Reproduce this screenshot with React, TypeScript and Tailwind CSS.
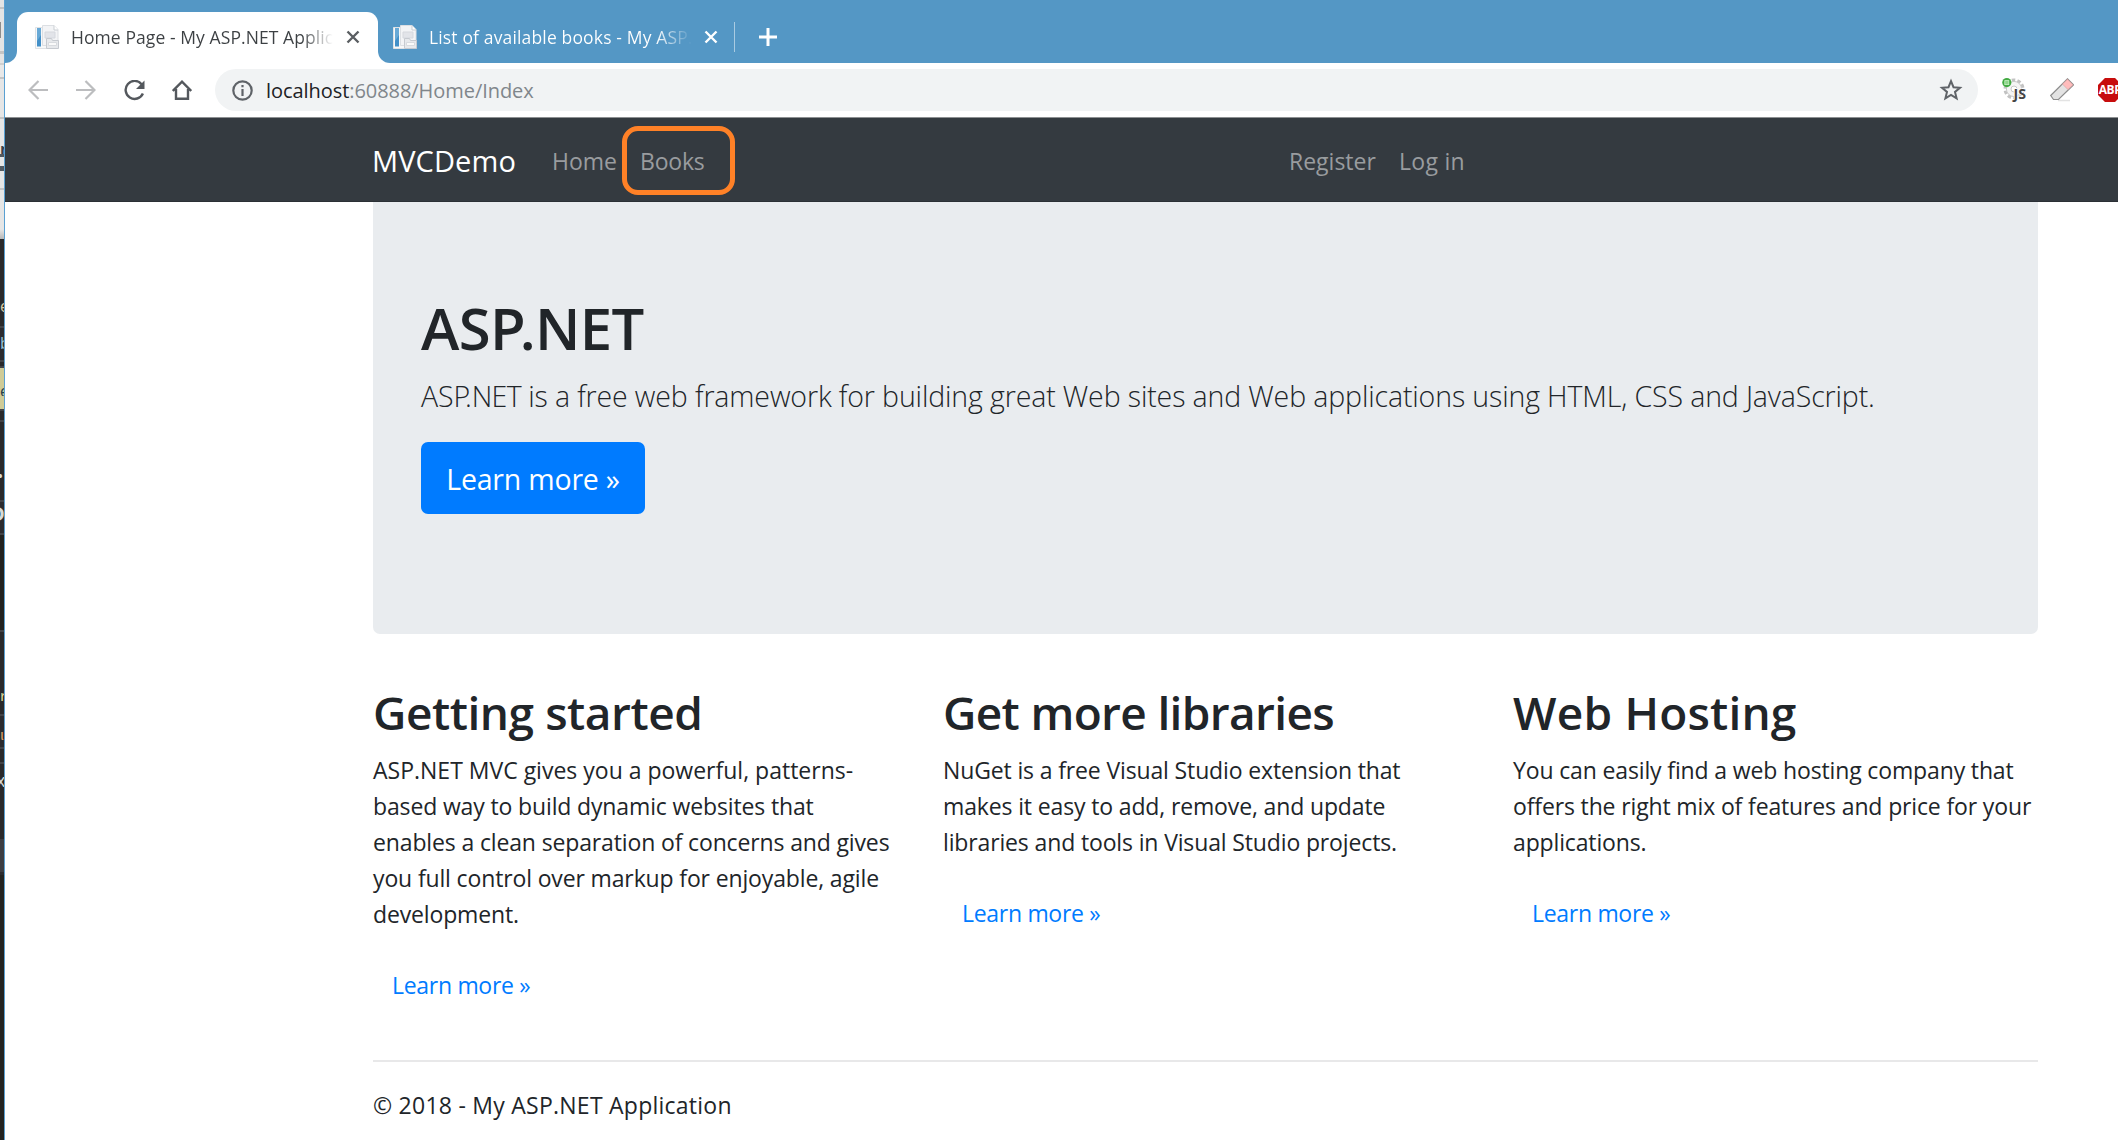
import type { ReactNode } from 'react';

/* Sliver of the editor window that peeks out behind the browser. */
const sliver: { h: number; cls: string; glyph?: string }[] = [
  { h: 7, cls: 'bg-[#e4e4e4]' },
  { h: 2, cls: 'bg-[#c4c4c4]' },
  { h: 13, cls: 'bg-[#e4e4e4]' },
  { h: 16, cls: 'bg-[#e4e4e4] border-l border-[#8c8c8c]' },
  { h: 13, cls: 'bg-[#e4e4e4]' },
  { h: 3, cls: 'bg-[#c4c4c4]' },
  { h: 9, cls: 'bg-[#e4e4e4]' },
  { h: 2, cls: 'bg-[#cfcfcf]' },
  { h: 12, cls: 'bg-[#e8e8e8]' },
  { h: 2, cls: 'bg-[#c4c4c4]' },
  { h: 38, cls: 'bg-[#e6e6e6]' },
  { h: 2, cls: 'bg-[#c4c4c4]' },
  { h: 23, cls: 'bg-[#e6e6e6]' },
  { h: 12, cls: 'bg-[#e6e6e6] text-[#39424c] text-[16px] font-bold', glyph: 'n' },
  { h: 3, cls: 'bg-[#525a62]' },
  { h: 9, cls: 'bg-[#e6e6e6]' },
  { h: 5, cls: 'bg-[#525a62]' },
  { h: 17, cls: 'bg-[#e6e6e6]' },
  { h: 2, cls: 'bg-[#c4c4c4]' },
  { h: 49, cls: 'bg-linear-to-b from-[#e6e6e6] from-80% to-[#b8b8b8]' },
  { h: 60, cls: 'bg-[#29292b]' },
  { h: 14, cls: 'bg-[#29292b] text-[#d8c9a0] text-[16px]', glyph: 'e' },
  { h: 13, cls: 'bg-[#29292b]' },
  { h: 2, cls: 'bg-[#424347]' },
  { h: 8, cls: 'bg-[#2b2b2f]' },
  { h: 16, cls: 'bg-[#2b2b2f] text-[#9cc4d8] text-[16px]', glyph: 'b' },
  { h: 8, cls: 'bg-[#2b2b2f]' },
  { h: 2, cls: 'bg-[#424347]' },
  { h: 4, cls: 'bg-[#29292b]' },
  { h: 2, cls: 'bg-[#424347]' },
  { h: 16, cls: 'bg-[#cfcb97]' },
  { h: 12, cls: 'bg-[#cfcb97] text-[#25404a] text-[16px]', glyph: 'e' },
  { h: 13, cls: 'bg-[#cfcb97]' },
  { h: 2, cls: 'bg-[#424347]' },
  { h: 9, cls: 'bg-[#29292b]' },
  { h: 2, cls: 'bg-[#424347]' },
  { h: 48, cls: 'bg-[#29292b]' },
  { h: 10, cls: 'bg-[#29292b] text-[#d6dad8] text-[12px] font-bold -indent-[2px]', glyph: '•' },
  { h: 20, cls: 'bg-[#29292b]' },
  { h: 2, cls: 'bg-[#424347]' },
  { h: 5, cls: 'bg-[#2b2b2f]' },
  { h: 16, cls: 'bg-[#2b2b2f] text-[#d6dad8] text-[20px] font-bold -indent-[10px]', glyph: 'D' },
  { h: 10, cls: 'bg-[#2b2b2f]' },
  { h: 2, cls: 'bg-[#424347]' },
  { h: 95, cls: 'bg-[#21211f]' },
  { h: 2, cls: 'bg-[#424347]' },
  { h: 57, cls: 'bg-[#29292b]' },
  { h: 12, cls: 'bg-[#29292b] text-[#e0dc98] text-[16px]', glyph: 'r' },
  { h: 13, cls: 'bg-[#29292b]' },
  { h: 2, cls: 'bg-[#424347]' },
  { h: 12, cls: 'bg-[#2b2b2f]' },
  { h: 12, cls: 'bg-[#2b2b2f] text-[#e0a368] text-[16px]', glyph: 'u' },
  { h: 7, cls: 'bg-[#2b2b2f]' },
  { h: 2, cls: 'bg-[#424347]' },
  { h: 13, cls: 'bg-[#29292b]' },
  { h: 2, cls: 'bg-[#424347]' },
  { h: 9, cls: 'bg-[#29292b]' },
  { h: 14, cls: 'bg-[#29292b] text-[#d6dad8] text-[18px] -indent-[4px]', glyph: 'x' },
  { h: 52, cls: 'bg-[#29292b]' },
  { h: 33, cls: 'bg-[#3c3d42]' },
  { h: 3, cls: 'bg-[#2b2b2f]' },
];

function BackgroundSliver() {
  return (
    <div className="flex w-[5px] shrink-0 flex-col overflow-hidden border-r border-[#5aa0d2] bg-[#232321]">
      {sliver.map((s, i) => (
        <div key={i} className={`shrink-0 overflow-hidden leading-[14px] ${s.cls}`} style={{ height: s.h }}>
          {s.glyph}
        </div>
      ))}
    </div>
  );
}

function Favicon() {
  return (
    <svg className="size-6 shrink-0" viewBox="0 0 24 24">
      <path d="M0.500 2.500h16v21h-16z" fill="#f7f8f9" stroke="#dfe2e5" />
      <path d="M2 3h4v18.500H2z" fill="#4390c8" />
      <path d="M2 3h4v7l-4 6z" fill="#68a9d6" />
      <path d="M7.500 0.500h11.500l4 4v16h-15.500z" fill="#f3f4f6" stroke="#dcdfe3" />
      <path d="M19 0.500v4.500h4" fill="#fff" stroke="#c9ced3" />
      <path d="M10 7h10v6H10z" fill="#e2e4e9" stroke="#d5d8de" />
      <path d="M11.500 13.500h5l1 2h6v8h-12z" fill="#e7e9ec" stroke="#c6cad0" />
      <path d="M13.500 17.500h8v3h-8z" fill="#fafafa" stroke="#d8dbdf" />
    </svg>
  );
}

function Close({ className }: { className: string }) {
  return (
    <svg className={`size-[14px] shrink-0 ${className}`} viewBox="0 0 14 14" fill="none" stroke="currentColor" strokeWidth="2.400">
      <path d="M1.500 1.500l11 11M12.500 1.500l-11 11" />
    </svg>
  );
}

function TabStrip() {
  return (
    <div className="flex h-[63px] items-stretch bg-[#5497c5] text-[17.5px] leading-[24px]">
      <div className="flex w-3 flex-col justify-end bg-white">
        <div className="h-full rounded-br-[12px] bg-[#5497c5]" />
      </div>
      <div className="mt-3 flex w-[361px] items-center rounded-t-[11px] bg-white pb-px pl-[18px]">
        <Favicon />
        <div className="-mt-px ml-[12px] w-[262px] overflow-hidden bg-linear-to-r from-[#3c4043] from-88% to-transparent bg-clip-text tracking-[0.08px] whitespace-nowrap text-transparent">
          Home Page - My ASP.NET Application
        </div>
        <Close className="ml-[13px] text-[#5a5e62]" />
      </div>
      <div className="flex flex-1 bg-white">
        <div className="flex flex-1 items-center rounded-bl-[12px] bg-[#5497c5] pt-[11px] pl-[15px]">
          <Favicon />
          <div className="-mt-px ml-[12px] w-[263px] overflow-hidden bg-linear-to-r from-white from-86% to-transparent bg-clip-text tracking-[0.15px] whitespace-nowrap text-transparent">
            List of available books - My ASP.NET Application
          </div>
          <Close className="ml-[12px] text-white" />
          <div className="ml-[16px] h-[30px] w-px bg-[#a9cbe2]" />
          <svg className="ml-[24px] size-[18px]" viewBox="0 0 18 18" stroke="#fff" strokeWidth="3" fill="none">
            <path d="M0 9h18M9 0v18" />
          </svg>
        </div>
      </div>
    </div>
  );
}

function Arrow({ className }: { className: string }) {
  return (
    <svg className={`size-[20px] shrink-0 ${className}`} viewBox="0 0 20 20" fill="none" stroke="#bcbdbf" strokeWidth="2.200">
      <path d="M20 10H1.500M10.500 1L1.500 10l9 9" />
    </svg>
  );
}

function Toolbar() {
  return (
    <div className="flex h-[54px] items-center overflow-hidden bg-white pl-[23px]">
      <Arrow className="" />
      <Arrow className="ml-[28px] rotate-180" />
      <svg className="ml-[28px] size-[21px] shrink-0" viewBox="0 0 21 21">
        <path d="M17.600 4.200A9 9 0 1 0 18.900 13.500" fill="none" stroke="#54585d" strokeWidth="2.400" />
        <path d="M20.500 0.500v8.500h-8.500z" fill="#54585d" />
      </svg>
      <svg className="ml-[27px] size-[20px] shrink-0" viewBox="0 0 20 20" fill="none" stroke="#54585d" strokeWidth="2.400">
        <path d="M0.800 11L10 1.700 19.200 11M4 9v9.800h12V9" />
      </svg>
      <div className="ml-[23px] flex h-[42px] w-[1763px] shrink-0 items-center rounded-full bg-[#f1f3f4] pr-[15px] pl-[17px]">
        <svg className="size-[21px] shrink-0" viewBox="0 0 21 21">
          <circle cx="10.500" cy="10.500" r="9.200" fill="none" stroke="#5f6368" strokeWidth="2.200" />
          <path d="M9.400 9h2.200v7H9.400zM9.400 5h2.200v2.300H9.400z" fill="#5f6368" />
        </svg>
        <div className="ml-[13px] flex-1 pt-[2px] text-[20px] leading-[30px] tracking-[-0.06px] text-[#80868b]">
          <span className="text-[#202124]">localhost</span>:60888/Home/Index
        </div>
        <svg className="size-[24px] shrink-0" viewBox="0 0 24 24" fill="none" stroke="#5f6368" strokeWidth="2">
          <path d="M12 3.200l2.500 6 6.500.5-5 4.200 1.600 6.400L12 16.900l-5.600 3.400L8 13.900 3 9.700l6.500-.5z" />
        </svg>
      </div>
      <svg className="ml-[24px] size-[24px] shrink-0" viewBox="0 0 24 24">
        <circle cx="12" cy="11" r="9" fill="none" stroke="#c2c2c2" strokeWidth="3" strokeDasharray="3.500 2.200" />
        <circle cx="12" cy="11" r="7.600" fill="#f5f5f5" stroke="#c9c9c9" strokeWidth="1" />
        <circle cx="12" cy="11" r="3" fill="#fff" stroke="#c9c9c9" strokeWidth="1" />
        <circle cx="4.800" cy="4.600" r="4.600" fill="#43ab43" />
        <rect x="2.800" y="2.600" width="4" height="4" fill="#8ed58a" stroke="#c9efc6" strokeWidth="0.800" />
        <text x="11.500" y="21" fontSize="14" fontWeight="700" fill="#444" stroke="#fff" strokeWidth="1.500" paintOrder="stroke" textLength="12.500" lengthAdjust="spacingAndGlyphs">JS</text>
      </svg>
      <svg className="ml-[24px] size-[24px] shrink-0" viewBox="0 0 24 24">
        <path d="M8 22.500h12" stroke="#e3e3e3" strokeWidth="1.500" />
        <path d="M0.700 17.500L17.500 0.800l6 6L8.500 21.500H3.500z" fill="#e3e3e3" stroke="#8d8d8d" strokeWidth="1.200" />
        <path d="M17.500 1.300l5.500 5.500-5 4.800-5.500-5.500z" fill="#ffbcbc" stroke="#d59a9a" strokeWidth="0.600" />
      </svg>
      <div className="ml-[24px] flex h-6 w-6 shrink-0 items-center justify-center bg-[#c70d0d] text-[12px] leading-none font-bold tracking-[-0.5px] text-white [clip-path:polygon(29%_0,71%_0,100%_29%,100%_71%,71%_100%,29%_100%,0_71%,0_29%)]">
        ABP
      </div>
    </div>
  );
}

function Navbar() {
  return (
    <nav className="flex h-[85px] items-center border-t border-[#8d9092] bg-[#343a40] pt-[2px] pl-[367px] text-[23px] whitespace-nowrap text-[#999c9f] shadow-[inset_0_-1px_0_#2b3035]">
      <a className="w-[180px] text-[29px] tracking-[0.1px] text-white">MVCDemo</a>
      <a className="w-[88px]">Home</a>
      <div className="relative w-[649px]">
        <a className="tracking-[-0.2px]">Books</a>
        <div className="absolute top-1/2 -left-[18px] h-[69px] w-[113px] -translate-y-[35px] rounded-[16px] border-[5px] border-[#ff8127]" />
      </div>
      <a className="w-[110px]">Register</a>
      <a className="tracking-[0.3px]">Log in</a>
    </nav>
  );
}

type ColumnProps = { title: string; titleClass: string; textClass: string; lines: string[] };

function Column({ title, titleClass, textClass, lines }: ColumnProps) {
  return (
    <div className="w-[570px] shrink-0">
      <h2 className={`text-[46px] leading-[58px] font-semibold ${titleClass}`}>{title}</h2>
      <p className={`mt-[11px] text-[23px] leading-[36px] tracking-[-0.14px] whitespace-nowrap ${textClass}`}>
        {lines.map((l) => (
          <span key={l} className="block">{l}</span>
        ))}
      </p>
      <a className="mt-[35px] block pl-[19px] text-[23px] leading-[36px] tracking-[-0.3px] text-[#007bff]">Learn more »</a>
    </div>
  );
}

function Page({ children }: { children: ReactNode }) {
  return <main className="ml-[368px] w-[1665px]">{children}</main>;
}

export default function App() {
  return (
    <div className="flex h-[1140px] w-[2118px] overflow-hidden bg-white font-['Open_Sans','Noto_Sans',sans-serif] text-[#212529]">
      <BackgroundSliver />
      <div className="min-w-0 flex-1">
        <TabStrip />
        <Toolbar />
        <Navbar />
        <Page>
          <section className="h-[432px] rounded-b-[7px] bg-[#e9ecef] px-12 pt-[90px]">
            <h1 className="text-[58px] leading-[72px] font-semibold tracking-[-0.6px]">
              AS<span className="tracking-[-6px]">P</span>.NET
            </h1>
            <p className="mt-[10px] text-[28.5px] leading-[45px] font-light tracking-[-0.13px] whitespace-nowrap">
              AS<span className="tracking-[-5px]">P</span>.<span className="tracking-[-0.7px]">NET</span> is a free web framework for building great Web sites and Web applications using HTML, CSS and JavaScript.
            </p>
            <a className="mt-[23px] flex h-[72px] w-[224px] items-center justify-center rounded-[7px] bg-[#007bff] pt-[2px] text-[28.5px] tracking-[-0.2px] whitespace-nowrap text-white">
              Learn more »
            </a>
          </section>
          <section className="mt-[49px] flex">
            <Column
              title="Getting started"
              titleClass="tracking-[-0.45px]"
              textClass="first-line:tracking-normal [&>span:first-child]:tracking-normal"
              lines={[
                'ASP.NET MVC gives you a powerful, patterns-',
                'based way to build dynamic websites that',
                'enables a clean separation of concerns and gives',
                'you full control over markup for enjoyable, agile',
                'development.',
              ]}
            />
            <Column
              title="Get more libraries"
              titleClass="tracking-[-0.65px]"
              textClass=""
              lines={[
                'NuGet is a free Visual Studio extension that',
                'makes it easy to add, remove, and update',
                'libraries and tools in Visual Studio projects.',
              ]}
            />
            <Column
              title="Web Hosting"
              titleClass="tracking-[0.2px]"
              textClass=""
              lines={[
                'You can easily find a web hosting company that',
                'offers the right mix of features and price for your',
                'applications.',
              ]}
            />
          </section>
          <hr className="mt-[57px] border-t-2 border-[#e8e8e9]" />
          <footer className="mt-[25px] text-[23px] leading-[36px] tracking-[0.25px]">© 2018 - My ASP.NET Application</footer>
        </Page>
      </div>
    </div>
  );
}
